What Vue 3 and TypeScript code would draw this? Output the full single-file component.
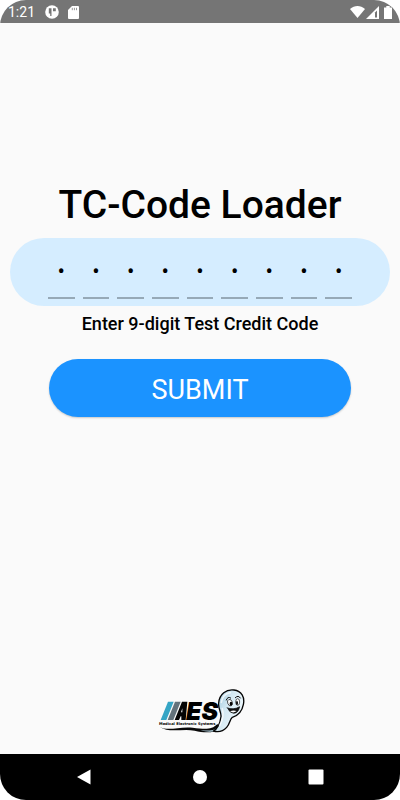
<script setup lang="ts">
import { ref } from 'vue'

const CODE_LENGTH = 9
const digits = ref<string[]>(Array.from({ length: CODE_LENGTH }, () => ''))

function advance(event: Event): void {
  const field = event.target as HTMLInputElement
  const next = field.nextElementSibling as HTMLInputElement | null
  if (field.value && next) next.focus()
}
</script>

<template>
  <div class="screen">
    <header class="status">
      <span class="time">1:21</span>
      <svg class="app-icon" viewBox="0 0 14 14" width="14" height="14" aria-hidden="true">
        <circle cx="7" cy="7" r="6.8" fill="#fff" />
        <path d="M3.800 3.300h2.700v7.600H5.200V8.500H3.800z" fill="#757575" />
        <path d="M8 3.300h2.800v3H8z" fill="#757575" />
      </svg>
      <svg class="card-icon" viewBox="0 0 11 13" width="11" height="13" aria-hidden="true">
        <path d="M4 0h6a1 1 0 0 1 1 1v11a1 1 0 0 1-1 1H1a1 1 0 0 1-1-1V4z" fill="#fff" />
        <path d="M4.300 1.800v2.400M6.400 1.800v2.400M8.500 1.800v2.400" stroke="#999" stroke-width="1" />
      </svg>
      <span class="spacer"></span>
      <svg viewBox="0 0 15 12" width="15" height="12" aria-hidden="true">
        <path d="M0 3C4.500-.9 10.500-.9 15 3L7.500 12z" fill="#fff" />
      </svg>
      <svg viewBox="0 0 13 13" width="13" height="13" aria-hidden="true">
        <path d="M0 13L13 0v13z" fill="#fff" />
        <path d="M9 6.500L11 4.500v7H9z" fill="#757575" />
      </svg>
      <svg class="battery" viewBox="0 0 8 13" width="8" height="13" aria-hidden="true">
        <path d="M2.300 0h3.400v1.500H8V13H0V1.500h2.300z" fill="#fff" />
      </svg>
    </header>

    <main class="content">
      <h1>TC-Code Loader</h1>
      <form @submit.prevent>
        <div class="code" role="group" aria-labelledby="code-label">
          <input
            v-for="(_, i) in digits"
            :key="i"
            v-model="digits[i]"
            type="text"
            inputmode="numeric"
            maxlength="1"
            placeholder="•"
            aria-labelledby="code-label"
            @input="advance"
          />
        </div>
        <p id="code-label">Enter 9-digit Test Credit Code</p>
        <button class="submit" type="submit">SUBMIT</button>
      </form>

      <svg class="logo" viewBox="15 21 270 144" width="90" height="48" role="img" aria-label="MES">
        <defs>
          <linearGradient id="body" x1="0" y1="0" x2="1" y2=".6">
            <stop offset="0" stop-color="#8fbdd4" />
            <stop offset=".5" stop-color="#d3e9f3" />
            <stop offset="1" stop-color="#f4fbff" />
          </linearGradient>
        </defs>
        <path d="M32 117L54 62H71L49 117z" fill="#35a5c5" />
        <path d="M53 117L75 62H92L70 117z" fill="#63727b" />
        <path d="M74 117L96 62H112L107 117H94V106H92L87 117zM97 94V82L93 94z" fill="#050505" />
        <text class="letters" x="108" y="116">ES</text>
        <text class="tagline" x="27" y="132">Medical Electronic Systems</text>
        <path d="M28 137C55 152 85 136 128 140C163 144 184 148 202 129L211 140C190 159 162 155 134 149C96 141 60 158 28 137z" fill="#080808" />
        <path d="M151 147C181 151 197 148 205 136L210 142C193 155 173 154 151 147z" fill="#b5d3e1" />
        <path d="M206 66C208 39 229 24 252 27C275 30 285 49 280 71C276 92 264 104 247 109C239 115 240 128 230 139C219 151 204 154 190 150C203 144 210 128 213 107C214 91 204 84 206 66z" fill="url(#body)" stroke="#050505" stroke-width="4" stroke-linejoin="round" />
        <path d="M214 64C217 47 227 37 241 35M217 83C222 99 216 120 209 134" fill="none" stroke="#fff" stroke-width="5" stroke-linecap="round" opacity=".7" />
        <path d="M229 57Q233 45 242 51M256 50Q265 41 271 51" fill="none" stroke="#050505" stroke-width="3" stroke-linecap="round" />
        <ellipse cx="240" cy="65" rx="7" ry="10" fill="#fff" stroke="#111" stroke-width="2" transform="rotate(-20 240 65)" />
        <ellipse cx="263" cy="63" rx="6" ry="10" fill="#fff" stroke="#111" stroke-width="2" />
        <ellipse cx="243" cy="68" rx="4" ry="6" fill="#050505" />
        <ellipse cx="261" cy="66" rx="3" ry="6" fill="#050505" />
        <path d="M230 80Q251 88 269 77Q265 96 251 97Q239 96 233 82" fill="#111" stroke="#050505" stroke-width="2" />
        <path d="M240 91Q250 86 260 90Q250 98 240 91z" fill="#fff" />
      </svg>
    </main>

    <nav class="navbar" aria-label="System">
      <button type="button" aria-label="Back">
        <svg viewBox="0 0 16 16" width="16" height="16"><path d="M1 8L14.500 .5v15z" fill="#fff" /></svg>
      </button>
      <button type="button" aria-label="Home">
        <svg viewBox="0 0 16 16" width="16" height="16"><circle cx="8" cy="8" r="7" fill="#fff" /></svg>
      </button>
      <button type="button" aria-label="Recent apps">
        <svg viewBox="0 0 16 16" width="16" height="16"><rect x=".5" y=".5" width="15" height="15" rx="1" fill="#fff" /></svg>
      </button>
    </nav>
  </div>
</template>

<style>
body {
  margin: 0;
  background: #fff;
}
</style>

<style scoped>
.screen {
  display: flex;
  flex-direction: column;
  min-height: 100vh;
  overflow: hidden;
  border-radius: 26px;
  background: #fafafa;
  color: #000;
  font-family: Roboto, "Liberation Sans", sans-serif;
}

.status {
  display: flex;
  align-items: center;
  box-sizing: border-box;
  height: 23px;
  padding: 1px 8px 0;
  background: #757575;
}

.time {
  color: #fff;
  font-size: 14px;
  line-height: 20px;
}

.app-icon {
  margin-left: 10px;
}

.card-icon {
  margin-left: 9px;
}

.spacer {
  flex: 1;
}

.status svg + svg:not(.card-icon) {
  margin-left: 1px;
}

.status .battery.battery {
  margin-left: 5px;
}

.content {
  display: flex;
  flex: 1;
  flex-direction: column;
  align-items: center;
  padding: 158px 10px 18px;
}

h1 {
  margin: 0 0 9px;
  font-size: 39px;
  font-weight: 500;
  line-height: 48px;
}

form {
  display: flex;
  flex-direction: column;
  align-items: center;
  width: 100%;
}

.code {
  display: grid;
  grid-template-columns: repeat(9, 1fr);
  gap: 8px;
  box-sizing: border-box;
  width: 100%;
  padding: 8px 38px 7px;
  border-radius: 34px;
  background: #d5edff;
}

.code input {
  box-sizing: border-box;
  width: 100%;
  min-width: 0;
  height: 53px;
  padding: 0;
  border: 0;
  border-bottom: 2px solid #96a9b7;
  border-radius: 0;
  outline: 0;
  background: transparent;
  color: #000;
  font: 22px Roboto, "Liberation Sans", sans-serif;
  text-align: center;
}

.code input::placeholder {
  color: #000;
  opacity: 1;
}

p {
  margin: 6px 0 23px;
  font-size: 18px;
  font-weight: 500;
  line-height: 24px;
}

.submit {
  width: calc(100% - 78px);
  padding: 14px 0 10px;
  border: 0;
  border-radius: 29px;
  background: #1b93ff;
  box-shadow: 0 1px 2px rgba(0, 0, 0, 0.2);
  color: #fff;
  font: 27px/34px Roboto, "Liberation Sans", sans-serif;
}

.logo {
  margin-top: auto;
}

.letters {
  font: italic 900 75px Inter, sans-serif;
}

.tagline {
  font: bold 11px "DejaVu Sans", sans-serif;
}

.navbar {
  display: flex;
  justify-content: space-around;
  padding: 8px 26px;
  background: #000;
}

.navbar button {
  display: flex;
  padding: 7px;
  border: 0;
  background: transparent;
}
</style>
